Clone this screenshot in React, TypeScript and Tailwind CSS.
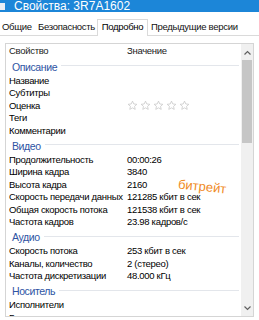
const font = { fontFamily: '"Liberation Sans", Arial, sans-serif' };

type Row = { label: string; value?: string; stars?: boolean };
type Group = { title: string; rows: Row[] };

const groups: Group[] = [
  {
    title: "Описание",
    rows: [
      { label: "Название" },
      { label: "Субтитры" },
      { label: "Оценка", stars: true },
      { label: "Теги" },
      { label: "Комментарии" },
    ],
  },
  {
    title: "Видео",
    rows: [
      { label: "Продолжительность", value: "00:00:26" },
      { label: "Ширина кадра", value: "3840" },
      { label: "Высота кадра", value: "2160" },
      { label: "Скорость передачи данных", value: "121285 кбит в сек" },
      { label: "Общая скорость потока", value: "121538 кбит в сек" },
      { label: "Частота кадров", value: "23.98 кадров/с" },
    ],
  },
  {
    title: "Аудио",
    rows: [
      { label: "Скорость потока", value: "253 кбит в сек" },
      { label: "Каналы, количество", value: "2 (стерео)" },
      { label: "Частота дискретизации", value: "48.000 кГц" },
    ],
  },
  {
    title: "Носитель",
    rows: [{ label: "Исполнители" }, { label: "Год" }],
  },
];

const Star = () => (
  <svg width="11" height="11" viewBox="0 0 24 24" fill="none" stroke="#c4c4c4" strokeWidth="1.6" strokeLinejoin="round">
    <path d="M12 2.5l2.9 6.2 6.6.7-5 4.5 1.4 6.6L12 17.1l-5.9 3.4 1.4-6.6-5-4.5 6.6-.7z" />
  </svg>
);

const Tabs = () => (
  <div className="flex items-end h-[24px] bg-white border-b border-[#dadada] text-[9.5px] tracking-[-0.3px] leading-[14px] text-[#111]">
    <div className="h-[15px] w-[32px] pl-[2px]">Общие</div>
    <div className="h-[15px] w-[65px] pl-[6px] whitespace-nowrap">Безопасность</div>
    <div className="h-[17px] w-[51px] -mb-px bg-white border border-b-0 border-[#dadada] text-center text-black">
      Подробно
    </div>
    <div className="h-[15px] pl-[3px] whitespace-nowrap">Предыдущие версии</div>
  </div>
);

const App = () => {
  return (
    <div className="w-[259px] h-[320px] overflow-hidden bg-white relative" style={font}>
      <div className="h-[12px] bg-[#1c86d8] flex items-center">
        <div className="w-[5px] h-[7px] bg-[#e8eef5] mr-[9px]" />
        <span className="text-white text-[12px] leading-[12px] -mt-[1px]">Свойства: 3R7A1602</span>
      </div>
      <Tabs />
      <div className="px-[5px] pt-[7px]">
        <div className="h-[274px] border border-[#d5d5d5] flex overflow-hidden">
          <div className="flex-1 pr-[2px]">
            <div className="h-[14px] flex items-center text-[9.5px] tracking-[-0.3px] text-[#222]">
              <span className="w-[121px] pl-[3px]">Свойство</span>
              <span>Значение</span>
            </div>
            {groups.map((g) => (
              <div key={g.title}>
                <div className="h-[16.5px] flex items-center pl-[6px] pt-[1px]">
                  <span className="text-[10.5px] tracking-[-0.4px] leading-[14px] text-[#2e54a3]">{g.title}</span>
                  <div className="flex-1 h-px bg-[#e3e6eb] ml-[4px] -mt-[2px]" />
                </div>
                {g.rows.map((r) => (
                  <div
                    key={r.label}
                    className="h-[12.5px] flex items-center text-[9.5px] tracking-[-0.3px] leading-[12px] text-black"
                  >
                    <span className="w-[121px] pl-[3px] whitespace-nowrap">{r.label}</span>
                    {r.stars ? (
                      <span className="flex gap-[2px]">
                        <Star />
                        <Star />
                        <Star />
                        <Star />
                        <Star />
                      </span>
                    ) : (
                      <span className="whitespace-nowrap">{r.value}</span>
                    )}
                  </div>
                ))}
              </div>
            ))}
          </div>
          <div className="w-[12px] bg-[#f0f0f0] flex flex-col items-center">
            <div className="h-[16px] flex items-center justify-center">
              <svg width="7" height="5" viewBox="0 0 7 5">
                <path d="M0.5 4.5L3.5 1.5L6.5 4.5" stroke="#606060" strokeWidth="1.2" fill="none" />
              </svg>
            </div>
            <div className="w-[10px] h-[83px] bg-[#c6c6c6]" />
            <div className="flex-1" />
            <div className="h-[16px] flex items-center justify-center">
              <svg width="7" height="5" viewBox="0 0 7 5">
                <path d="M0.5 0.5L3.5 3.5L6.5 0.5" stroke="#606060" strokeWidth="1.2" fill="none" />
              </svg>
            </div>
          </div>
        </div>
      </div>
      <div className="absolute left-[178px] top-[179px] rotate-[6deg] text-[13px] leading-[16px] text-[#f08a24]">
        битрейт
      </div>
    </div>
  );
};

export default App;
